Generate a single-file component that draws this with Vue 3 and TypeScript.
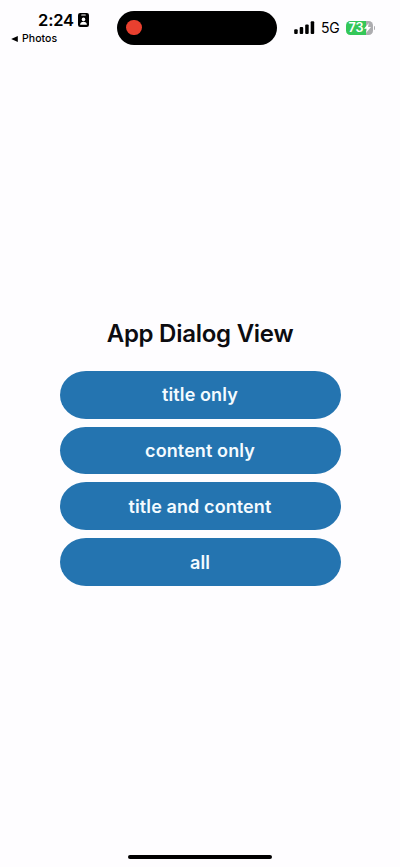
<script setup lang="ts">
interface DialogOption {
  id: string
  label: string
}

const options: DialogOption[] = [
  { id: 'title', label: 'title only' },
  { id: 'content', label: 'content only' },
  { id: 'both', label: 'title and content' },
  { id: 'all', label: 'all' },
]
</script>

<template>
  <div class="screen">
    <header class="status">
      <div class="status-left">
        <div class="clock">
          <span class="time">2:24</span>
          <svg class="badge" viewBox="0 0 11 14" width="11" height="14" aria-hidden="true">
            <rect x="0" y="0" width="11" height="14" rx="2.2" fill="#000" />
            <rect x="3.2" y="1.4" width="4.6" height="1.2" rx="0.5" fill="#fff" />
            <circle cx="5.5" cy="6.4" r="1.8" fill="#fff" />
            <path d="M2.1 11.8c0-2.1 1.4-3.1 3.4-3.1s3.4 1 3.4 3.1z" fill="#fff" />
          </svg>
        </div>
        <div class="back">
          <svg viewBox="0 0 7 6" width="7" height="6" aria-hidden="true">
            <path d="M0.2 3 6.8 0V6z" fill="#000" />
          </svg>
          <span>Photos</span>
        </div>
      </div>
      <div class="island"><span class="record"></span></div>
      <div class="status-right">
        <svg class="signal" viewBox="0 0 21 13" width="21" height="13" aria-hidden="true">
          <rect x="0.2" y="8.3" width="3.5" height="4.7" rx="1" />
          <rect x="5.7" y="6" width="3.5" height="7" rx="1" />
          <rect x="11.2" y="3.4" width="3.5" height="9.6" rx="1" />
          <rect x="16.7" y="0.3" width="3.5" height="12.7" rx="1" />
        </svg>
        <span class="network">5G</span>
        <div class="battery">
          <span class="level">73</span>
          <svg class="bolt" viewBox="0 0 7 10" width="7" height="10" aria-hidden="true">
            <path d="M4.8 0 0 5.8H2.9L2 10 7 4.1H4z" fill="#fff" />
          </svg>
        </div>
        <span class="cap"></span>
      </div>
    </header>

    <main class="content">
      <h1 class="heading">App Dialog View</h1>
      <div class="actions">
        <button v-for="option in options" :key="option.id" class="action" type="button">
          {{ option.label }}
        </button>
      </div>
    </main>

    <footer class="home"><span class="indicator"></span></footer>
  </div>
</template>

<style>
body {
  margin: 0;
  background: #fefdff;
}
</style>

<style scoped>
.screen {
  box-sizing: border-box;
  width: 400px;
  height: 867px;
  display: flex;
  flex-direction: column;
  overflow: hidden;
  background: #fefdff;
  color: #0c0c10;
  font-family: Inter, "Liberation Sans", sans-serif;
}

.status {
  display: grid;
  grid-template-columns: 117px 160px 123px;
  height: 56px;
  color: #000;
}

.status-left {
  padding: 11px 0 0 11px;
}

.clock {
  display: flex;
  align-items: center;
  gap: 4px;
  height: 18px;
  padding-left: 27px;
}

.time {
  font-size: 16.5px;
  font-weight: 600;
  line-height: 18px;
  letter-spacing: -0.15px;
}

.back {
  display: flex;
  align-items: center;
  gap: 4px;
  height: 13px;
  margin-top: 3px;
  font-size: 10.5px;
  font-weight: 500;
  letter-spacing: 0.05px;
  line-height: 13px;
}

.island {
  box-sizing: border-box;
  display: flex;
  align-items: center;
  height: 34px;
  margin-top: 10.5px;
  padding-left: 9px;
  border-radius: 17px;
  background: #000;
}

.record {
  width: 15.5px;
  height: 15.5px;
  border-radius: 50%;
  background: #e9402f;
}

.status-right {
  display: flex;
  align-items: center;
  height: 15px;
  margin-top: 20px;
  padding-left: 17px;
}

.signal {
  flex: none;
}

.network {
  width: 18px;
  margin-left: 6px;
  font-size: 14px;
  line-height: 15px;
  letter-spacing: -0.3px;
}

.battery {
  box-sizing: border-box;
  display: flex;
  align-items: center;
  flex: none;
  width: 26.5px;
  height: 14px;
  margin-left: 7px;
  padding-left: 2.5px;
  border-radius: 4.3px;
  background: linear-gradient(90deg, #34c759 0 19.5px, #adadb0 19.5px);
  color: #fff;
}

.level {
  width: 15.5px;
  font-size: 12.5px;
  font-weight: 600;
  line-height: 14px;
  letter-spacing: -0.1px;
}

.bolt {
  flex: none;
}

.cap {
  width: 1.5px;
  height: 4px;
  margin-left: 1px;
  border-radius: 0 2px 2px 0;
  background: #adadb0;
}

.content {
  flex: 1;
  padding-top: 262px;
}

.heading {
  margin: 0;
  font-size: 24px;
  font-weight: 600;
  line-height: 32px;
  letter-spacing: -0.26px;
  text-align: center;
}

.actions {
  display: flex;
  flex-direction: column;
  gap: 8px;
  margin: 20.75px 59.5px 0;
}

.action {
  height: 47.8px;
  padding: 1px 0 0;
  border: 0;
  border-radius: 26px / 24px;
  background: #2474b0;
  color: #f4fbff;
  font-family: inherit;
  font-size: 18px;
  font-weight: 600;
  line-height: 24px;
  letter-spacing: 0.1px;
  text-align: center;
}

.home {
  display: flex;
  justify-content: center;
  height: 12.3px;
}

.indicator {
  width: 143.5px;
  height: 4.7px;
  border-radius: 2.4px;
  background: #000;
}
</style>
